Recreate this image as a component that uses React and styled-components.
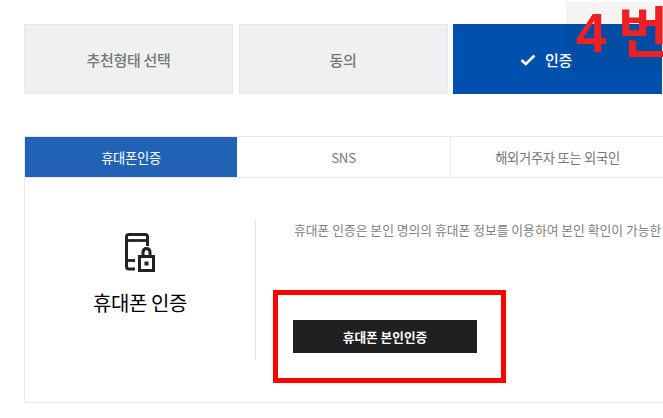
import React from "react";
import styled, { createGlobalStyle } from "styled-components";

const GlobalStyle = createGlobalStyle`
  html, body {
    margin: 0;
    padding: 0;
    width: 663px;
    height: 418px;
    overflow: hidden;
    background: #fff;
    font-family: "Noto Sans CJK KR", "Noto Sans", sans-serif;
  }
  * {
    box-sizing: border-box;
  }
`;

const steps = [
  { label: "추천형태 선택" },
  { label: "동의" },
  { label: "인증", active: true },
];

const tabs = [
  { label: "휴대폰인증", active: true },
  { label: "SNS" },
  { label: "해외거주자 또는 외국인" },
];

const CheckIcon = () => (
  <svg width="16" height="12" viewBox="0 0 16 12" fill="none">
    <path d="M1.5 6 L5.8 10 L14.5 1.5" stroke="#fff" strokeWidth="2.6" />
  </svg>
);

const PhoneLockIcon = () => (
  <svg width="30" height="39" viewBox="0 0 30 39" fill="none">
    <path
      d="M10 36 H4 Q1.5 36 1.5 33.5 V4 Q1.5 1.5 4 1.5 H20 Q22.5 1.5 22.5 4 V13"
      stroke="#222"
      strokeWidth="3"
    />
    <path d="M1.5 7.5 H22.5" stroke="#222" strokeWidth="2.8" />
    <path d="M1.5 27.5 H10" stroke="#222" strokeWidth="2.8" />
    <path
      d="M18 23 V19.5 Q18 15.5 21.5 15.5 Q25 15.5 25 19.5 V23"
      stroke="#222"
      strokeWidth="3"
    />
    <rect x="14.5" y="23.5" width="14" height="14" stroke="#222" strokeWidth="3" />
    <rect x="19.5" y="28.5" width="4" height="4" fill="#222" />
  </svg>
);

const App = () => {
  return (
    <Page>
      <GlobalStyle />
      <StepRow>
        {steps.map((step) => (
          <Step key={step.label} $active={step.active}>
            {step.active && <CheckIcon />}
            {step.label}
          </Step>
        ))}
      </StepRow>
      <TabRow>
        {tabs.map((tab) => (
          <Tab key={tab.label} $active={tab.active}>
            {tab.label}
          </Tab>
        ))}
      </TabRow>
      <Panel>
        <Summary>
          <PhoneLockIcon />
          <SummaryTitle>휴대폰 인증</SummaryTitle>
        </Summary>
        <Detail>
          <Description>
            휴대폰 인증은 본인 명의의 휴대폰 정보를 이용하여 본인 확인이 가능한
          </Description>
          <VerifyButton>휴대폰 본인인증</VerifyButton>
          <Highlight />
        </Detail>
      </Panel>
      <Annotation>4 번</Annotation>
    </Page>
  );
};

export default App;

const Page = styled.div`
  position: relative;
  width: 663px;
  height: 418px;
  padding: 24px 0 0 24px;
  overflow: hidden;
`;

const StepRow = styled.div`
  display: flex;
  gap: 5.5px;
`;

const Step = styled.div`
  flex: 0 0 209px;
  height: 70px;
  display: flex;
  align-items: center;
  justify-content: center;
  gap: 9px;
  padding-top: 1px;
  padding-right: ${(props) => (props.$active ? "23px" : "0")};
  font-size: 15px;
  font-weight: 500;
  letter-spacing: -0.3px;
  color: ${(props) => (props.$active ? "#fff" : "#777")};
  background: ${(props) => (props.$active ? "#0051ad" : "#eef0f2")};
  border: 1px solid ${(props) => (props.$active ? "#0051ad" : "#e6e8eb")};
`;

const TabRow = styled.div`
  display: grid;
  grid-template-columns: 212px 214px 213px;
  width: 639px;
  height: 42px;
  margin-top: 42px;
  border-top: 1px solid #e8e9eb;
  border-bottom: 1px solid #e8e9eb;
  border-left: 1px solid #e8e9eb;
`;

const Tab = styled.div`
  display: flex;
  align-items: center;
  justify-content: center;
  font-size: 13.3px;
  letter-spacing: -0.3px;
  color: ${(props) => (props.$active ? "#fff" : "#777")};
  background: ${(props) => (props.$active ? "#2262b4" : "#fff")};
  &:nth-child(2) {
    border-right: 1px solid #e8e9eb;
  }
`;

const Panel = styled.div`
  display: flex;
  width: 639px;
  height: 225px;
  padding-top: 42px;
  border-left: 1px solid #e8e9eb;
  border-bottom: 1px solid #e8e9eb;
`;

const Summary = styled.div`
  flex: 0 0 231px;
  height: 140px;
  display: flex;
  flex-direction: column;
  align-items: center;
  padding-top: 13px;
  border-right: 1px solid #e3e4e6;
`;

const SummaryTitle = styled.div`
  margin-top: 17px;
  font-size: 20px;
  font-weight: 400;
  line-height: 28px;
  letter-spacing: -0.4px;
  color: #000;
`;

const Detail = styled.div`
  position: relative;
  flex: 1;
  min-width: 0;
  padding-left: 37px;
`;

const Description = styled.p`
  margin: 0 0 0 1px;
  font-size: 12.8px;
  line-height: 20px;
  white-space: nowrap;
  color: #808080;
`;

const VerifyButton = styled.button`
  display: block;
  width: 184px;
  height: 33px;
  margin-top: 80px;
  padding: 0;
  border: none;
  background: #202022;
  color: #fff;
  font-family: inherit;
  font-size: 12.7px;
  font-weight: 700;
`;

const Highlight = styled.div`
  position: absolute;
  left: 17px;
  top: 70px;
  width: 233px;
  height: 93px;
  border: 5px solid #ff0000;
  pointer-events: none;
`;

const Annotation = styled.div`
  position: absolute;
  left: 566px;
  top: 2px;
  width: 97px;
  height: 70px;
  padding-left: 10px;
  background: rgba(0, 0, 0, 0.045);
  color: #ed2024;
  font-family: "Liberation Sans", "Noto Sans CJK KR", sans-serif;
  font-size: 55px;
  font-weight: 700;
  line-height: 62px;
  letter-spacing: -2px;
  white-space: nowrap;
  overflow: hidden;
`;
